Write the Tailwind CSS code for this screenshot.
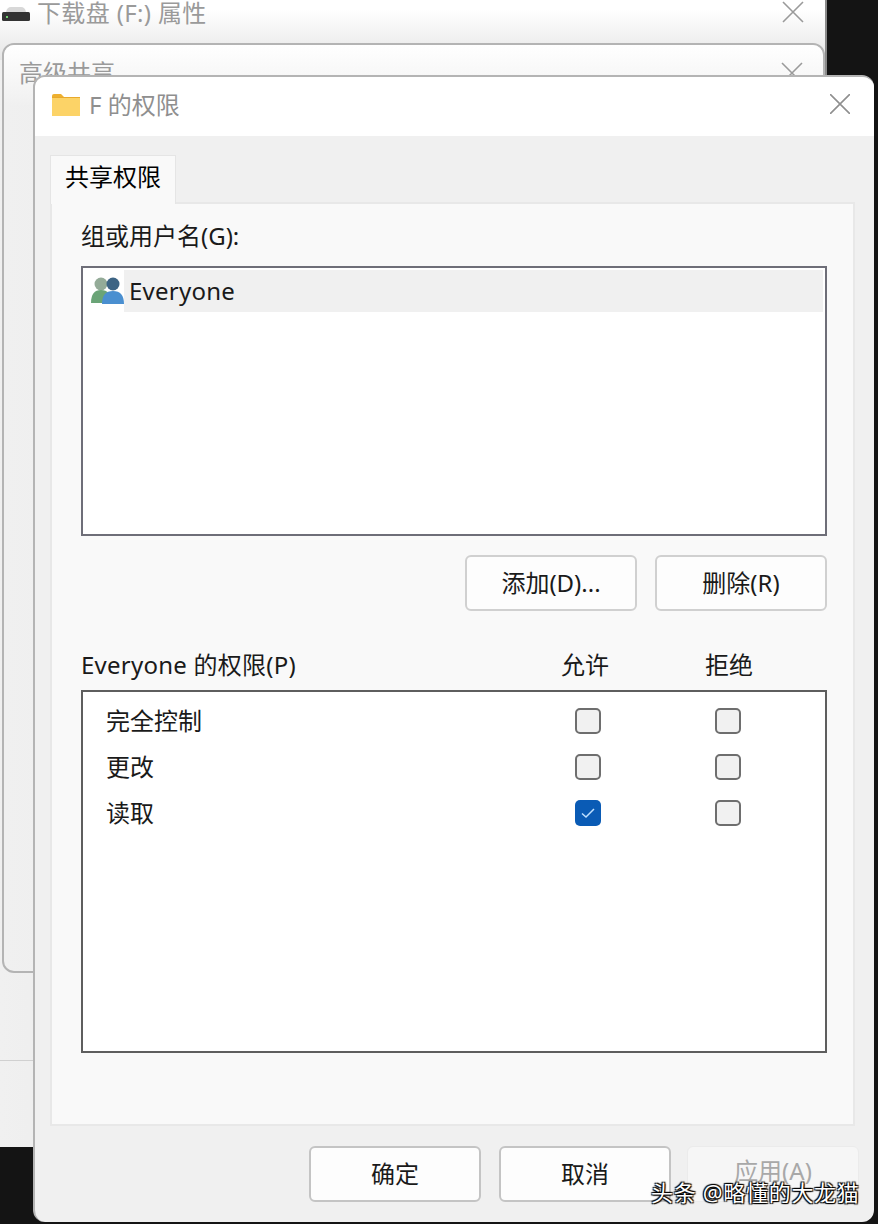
<!DOCTYPE html>
<html lang="zh-CN">
<head>
    <meta charset="UTF-8">
    <title>F 的权限</title>
    <script src="https://cdn.jsdelivr.net/npm/@tailwindcss/browser@4"></script>
</head>
<body class="bg-[#141414] font-['Noto_Sans','Noto_Sans_CJK_SC',sans-serif] text-[24px] leading-[32px] text-[#1a1a1a]">
<div class="relative w-[878px] h-[1224px] overflow-hidden">

    <!-- back window: drive properties -->
    <div class="absolute left-0 top-[-40px] w-[827px] h-[1187px] border-r-2 border-[#8a8a8a] bg-gradient-to-r from-[#f0f0f0] to-[#d4d4d4]">
        <div class="h-[100px] bg-gradient-to-b from-white from-50% to-[#e6e6e6] flex items-start pt-[37px] pl-[2px] text-[#9a9a9a]">
            <svg class="w-[28px] h-[15px] mr-[7px] mt-[9px]" viewBox="0 0 28 15">
                <path d="M4 6 Q5 1 9 1 H19 Q23 1 24 6 Z" fill="#d8d8d8"/>
                <rect x="0" y="6" width="28" height="9" rx="1.5" fill="#333"/>
                <rect x="4" y="10" width="2" height="2" fill="#6fcf6f"/>
            </svg>
            <span class="tracking-[0.35px]">下载盘 (F:) 属性</span>
            <svg class="absolute left-[782px] top-[41px] w-[22px] h-[22px]" viewBox="0 0 22 22" fill="none" stroke="#9a9a9a" stroke-width="1.6"><path d="M1 1 21 21M21 1 1 21"/></svg>
        </div>
        <div class="absolute left-0 top-[1100px] w-[34px] h-px bg-[#d0d0d0]"></div>
    </div>

    <!-- back window: advanced sharing -->
    <div class="absolute left-[2px] top-[43px] w-[823px] h-[930px] rounded-[12px] border-2 border-[#b4b4b4] overflow-hidden bg-gradient-to-r from-[#f0f0f0] to-[#dcdcdc]">
        <div class="h-[60px] bg-gradient-to-b from-white to-[#f0f0f0] pl-[15px] pt-[12px] text-[#9a9a9a]">高级共享</div>
        <svg class="absolute left-[777px] top-[17px] w-[22px] h-[22px]" viewBox="0 0 22 22" fill="none" stroke="#9a9a9a" stroke-width="1.6"><path d="M1 1 21 21M21 1 1 21"/></svg>
    </div>

    <!-- front window -->
    <div class="absolute left-[33px] top-[75px] w-[841px] h-[1147px] rounded-[12px] border-t-2 border-l-2 border-[#b4b4b4] bg-[#f0f0f0] overflow-hidden flex flex-col">
        <div class="h-[59px] shrink-0 bg-white flex items-center pl-[17px] pb-[4px] relative text-[#8f8f8f]">
            <svg class="w-[28px] h-[22px] mr-[9px]" viewBox="0 0 28 22">
                <path d="M0 2 Q0 0 2 0 H9 L12 3 H0 Z" fill="#eeb02f"/>
                <rect x="0" y="3" width="28" height="19" fill="#fcd367"/>
                <rect x="0" y="3" width="28" height="1" fill="#e8a92c"/>
            </svg>
            <span>F 的权限</span>
            <svg class="absolute left-[795px] top-[17px] w-[20px] h-[20px]" viewBox="0 0 20 20" fill="none" stroke="#8f8f8f" stroke-width="1.6"><path d="M0 0 20 20M20 0 0 20"/></svg>
        </div>

        <div class="pl-[15px] pr-[19px] pt-[19px] flex-1 flex flex-col">
            <div class="relative z-10 w-[126px] h-[49px] -mb-[2px] pb-[6px] bg-[#f9f9f9] border border-b-0 border-[#e5e5e5] flex items-center justify-center text-black">共享权限</div>

            <div class="h-[924px] bg-[#f9f9f9] border-2 border-[#e8e8e8] pl-[29px] pr-[26px] pt-[16px]">
                <div class="h-[32px] mb-[14px]">组或用户名(G):</div>
                <div class="h-[270px] bg-white border-2 border-[#6e6e78] pt-[2px] pr-[2px] flex">
                    <div class="w-[41px] flex justify-end items-center h-[42px]">
                        <svg class="w-[33px] h-[28px] mb-[3px]" viewBox="0 0 33 28">
                            <circle cx="10" cy="8" r="6.5" fill="#94ab98"/>
                            <path d="M0 27 Q0 14 10 14 Q20 14 20 27 Z" fill="#6aa477"/>
                            <circle cx="22" cy="8" r="6.5" fill="#3d6484"/>
                            <path d="M11 28 Q11 15 22 15 Q33 15 33 28 Z" fill="#4a8fd0"/>
                        </svg>
                    </div>
                    <div class="flex-1 h-[42px] bg-[#f0f0f0] pl-[5px] flex items-center tracking-[0.25px]">Everyone</div>
                </div>

                <div class="flex justify-end gap-[18px] mt-[19px]">
                    <button class="w-[172px] h-[56px] bg-[#fdfdfd] border-2 border-[#d0d0d0] rounded-[6px]">添加(D)...</button>
                    <button class="w-[172px] h-[56px] bg-[#fdfdfd] border-2 border-[#d0d0d0] rounded-[6px]">删除(R)</button>
                </div>

                <div class="flex h-[32px] mt-[38px] mb-[9px]">
                    <div class="w-[480px] tracking-[0.25px]">Everyone 的权限(P)</div>
                    <div class="w-[144px]">允许</div>
                    <div>拒绝</div>
                </div>
                <div class="h-[363px] bg-white border-2 border-[#5e5e5e] pl-[23px] pt-[6px]">
                    <div class="flex items-center h-[46px]">
                        <div class="w-[469px]">完全控制</div>
                        <div class="w-[26px] h-[26px] rounded-[5px] bg-[#f1f1f1] border-2 border-[#6e6e6e] mr-[114px]"></div>
                        <div class="w-[26px] h-[26px] rounded-[5px] bg-[#f1f1f1] border-2 border-[#6e6e6e]"></div>
                    </div>
                    <div class="flex items-center h-[46px]">
                        <div class="w-[469px]">更改</div>
                        <div class="w-[26px] h-[26px] rounded-[5px] bg-[#f1f1f1] border-2 border-[#6e6e6e] mr-[114px]"></div>
                        <div class="w-[26px] h-[26px] rounded-[5px] bg-[#f1f1f1] border-2 border-[#6e6e6e]"></div>
                    </div>
                    <div class="flex items-center h-[46px]">
                        <div class="w-[469px]">读取</div>
                        <div class="w-[26px] h-[26px] rounded-[5px] bg-[#0a5bb5] mr-[114px] flex items-center justify-center">
                            <svg class="w-[14px] h-[12px]" viewBox="0 0 14 12" fill="none" stroke="#bfe0ff" stroke-width="1.5"><path d="M1 6.5 5 10 13 2"/></svg>
                        </div>
                        <div class="w-[26px] h-[26px] rounded-[5px] bg-[#f1f1f1] border-2 border-[#6e6e6e]"></div>
                    </div>
                </div>
            </div>

            <div class="flex justify-end gap-[18px] mt-[20px] mr-[-4px]">
                <button class="w-[172px] h-[56px] bg-[#fdfdfd] border-2 border-[#c4c4c4] rounded-[6px]">确定</button>
                <button class="w-[172px] h-[56px] bg-[#fdfdfd] border-2 border-[#c4c4c4] rounded-[6px] mr-[-2px]">取消</button>
                <button class="w-[172px] h-[56px] bg-[#f6f6f6] border border-[#ebebeb] rounded-[6px] text-[#a8a8a8] pb-[6px]">应用(A)</button>
            </div>
        </div>
    </div>

    <!-- watermark -->
    <div class="absolute left-[651px] top-[1176px] text-[22px] leading-[32px] tracking-[0.7px] whitespace-nowrap text-white [text-shadow:1px_1px_1px_#000,-1px_-1px_1px_#000,1px_-1px_1px_#000,-1px_1px_1px_#000]">头条 @略懂的大龙猫</div>
</div>
</body>
</html>
